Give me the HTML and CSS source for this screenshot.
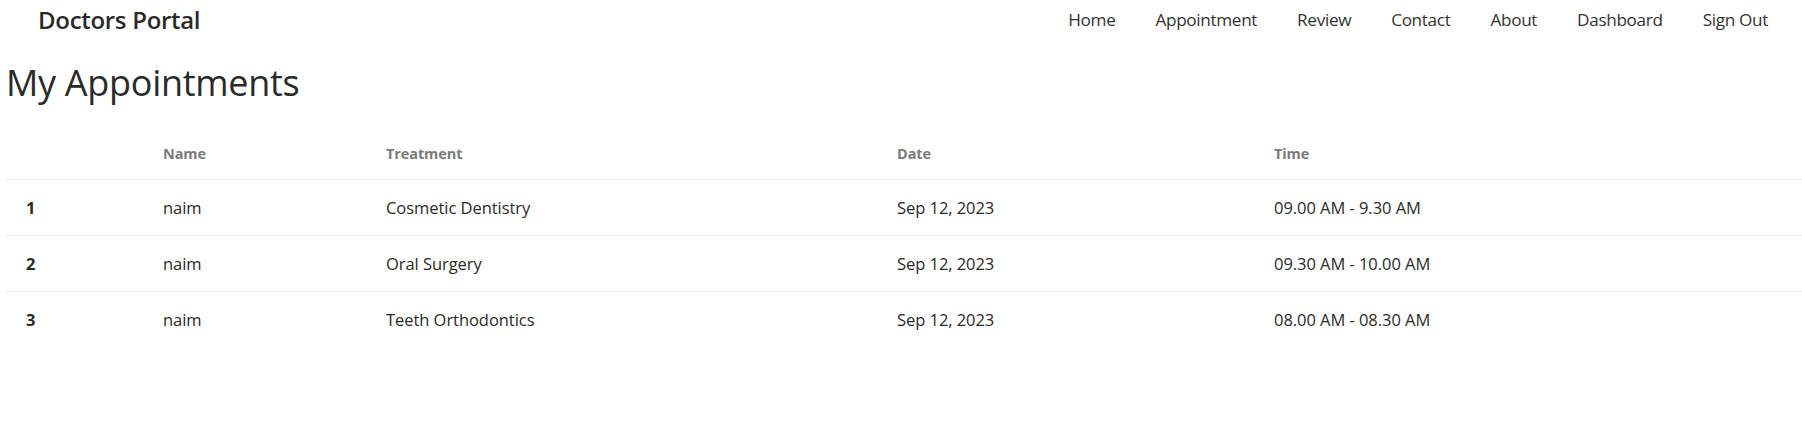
FILE: index.html
```html
<!DOCTYPE html>
<html lang="en">
<head>
<meta charset="utf-8">
<title>Doctors Portal</title>
<link rel="stylesheet" href="styles.css">
</head>
<body>
<header class="navbar">
  <a class="brand" href="#">Doctors Portal</a>
  <nav class="menu">
    <a class="menu-item" href="#">Home</a>
    <a class="menu-item" href="#">Appointment</a>
    <a class="menu-item" href="#">Review</a>
    <a class="menu-item" href="#">Contact</a>
    <a class="menu-item" href="#">About</a>
    <a class="menu-item" href="#">Dashboard</a>
    <a class="menu-item" href="#">Sign Out</a>
  </nav>
</header>
<main class="content">
  <h1 class="title">My Appointments</h1>
  <table class="table">
    <colgroup>
      <col class="c-num"><col class="c-name"><col class="c-treat"><col class="c-date"><col>
    </colgroup>
    <thead>
      <tr><th></th><th>Name</th><th>Treatment</th><th>Date</th><th>Time</th></tr>
    </thead>
    <tbody>
      <tr><th>1</th><td>naim</td><td>Cosmetic Dentistry</td><td>Sep 12, 2023</td><td>09.00 AM - 9.30 AM</td></tr>
      <tr><th>2</th><td>naim</td><td>Oral Surgery</td><td>Sep 12, 2023</td><td>09.30 AM - 10.00 AM</td></tr>
      <tr><th>3</th><td>naim</td><td>Teeth Orthodontics</td><td>Sep 12, 2023</td><td>08.00 AM - 08.30 AM</td></tr>
    </tbody>
  </table>
</main>
</body>
</html>
```
FILE: styles.css
```css
* { box-sizing: border-box; }
body {
  margin: 0;
  background: #ffffff;
  color: #2a2a2a;
  font-family: "Open Sans", "Noto Sans", sans-serif;
}
a { color: inherit; text-decoration: none; }

.navbar {
  display: flex;
  align-items: center;
  justify-content: space-between;
  height: 40px;
  padding: 0 14px 0 38px;
}
.brand {
  font-size: 24px;
  font-weight: 600;
  letter-spacing: -0.3px;
  line-height: 40px;
}
.menu { display: flex; align-items: center; }
.menu-item {
  font-size: 17.2px;
  line-height: 40px;
  padding: 0 20px;
  color: #333333;
  letter-spacing: -0.35px;
}

.content { padding-left: 6px; }
.title {
  margin: 20px 0 23px 0;
  font-size: 36px;
  font-weight: 400;
  line-height: 45px;
  letter-spacing: -0.3px;
}

.table {
  width: 100%;
  border-collapse: collapse;
  text-align: left;
}
.c-num { width: 137px; }
.c-name { width: 223px; }
.c-treat { width: 511px; }
.c-date { width: 377px; }

.table thead th {
  height: 51px;
  padding: 0 20px;
  font-size: 14.5px;
  font-weight: 700;
  color: #7b7b7b;
  border-bottom: 1px solid #ececec;
  vertical-align: middle;
  letter-spacing: -0.1px;
}
.table tbody th,
.table tbody td {
  height: 56px;
  padding: 0 20px;
  font-size: 16.5px;
  vertical-align: middle;
  border-bottom: 1px solid #ececec;
  letter-spacing: -0.05px;
}
.table tbody th { font-weight: 700; }
.table tbody td { font-weight: 400; }
.table tbody tr:last-child th,
.table tbody tr:last-child td { border-bottom: none; }
```
